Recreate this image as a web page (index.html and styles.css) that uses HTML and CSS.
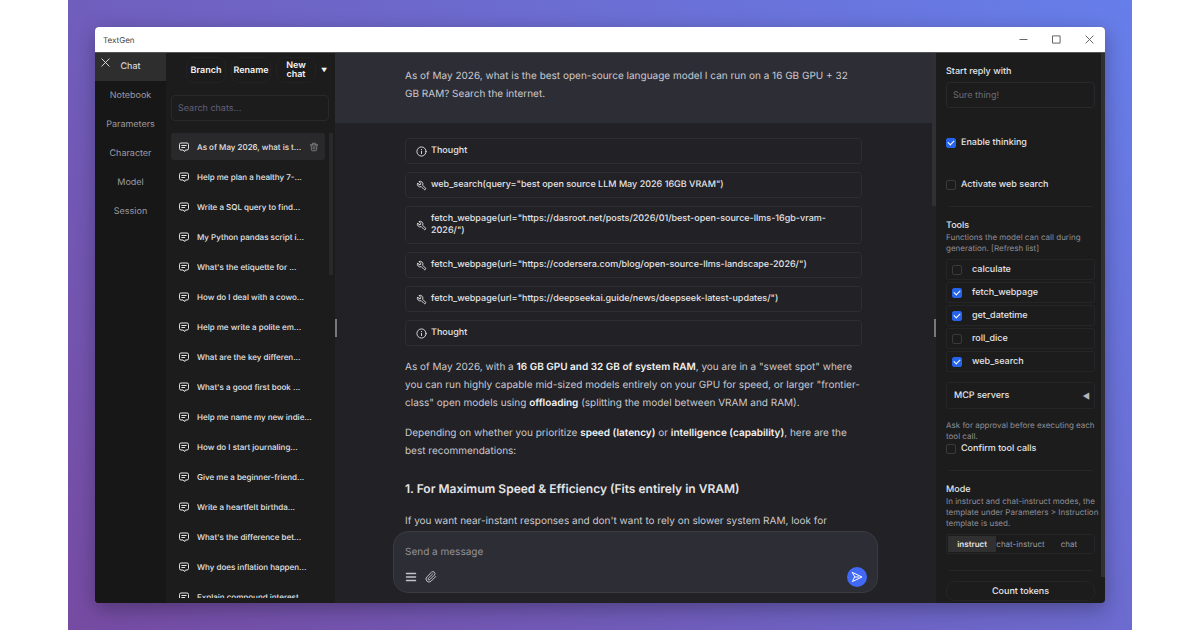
FILE: index.html
```html
<!DOCTYPE html>
<html lang="en">
<head>
  <meta charset="UTF-8" />
  <meta name="viewport" content="width=device-width, initial-scale=1.0" />
  <title>TextGen</title>
  <link rel="stylesheet" href="styles.css">
</head>
<body>
  <svg class="sprite" aria-hidden="true">
    <symbol id="i-chat" viewBox="0 0 24 24"><path d="M7.5 9h9M7.5 13h6M13 20.5L10 18H6a3 3 0 0 1-3-3V7a3 3 0 0 1 3-3h12a3 3 0 0 1 3 3v8a3 3 0 0 1-3 3h-2.5z"/></symbol>
    <symbol id="i-info" viewBox="0 0 24 24"><circle cx="12" cy="12" r="10"/><path d="M12 16.500v-5M12 7.500v.5"/></symbol>
    <symbol id="i-tool" viewBox="0 0 24 24"><path d="M7 10h3V7L6.500 3.500a6 6 0 0 1 8 8l6 6a2 2 0 0 1-3 3l-6-6a6 6 0 0 1-8-8L7 10z"/></symbol>
    <symbol id="i-trash" viewBox="0 0 24 24"><path d="M3 7h18M10 11v6M14 11v6M5 7l1 12a2 2 0 0 0 2 2h8a2 2 0 0 0 2-2l1-12M8 7V3h8v4"/></symbol>
    <symbol id="i-close" viewBox="0 0 24 24"><path d="M4 4l16 16M20 4L4 20"/></symbol>
  </svg>

  <div class="stage">
    <div class="window">
      <header class="titlebar">
        <span>TextGen</span>
        <div class="window-buttons">
          <button aria-label="Minimize"><svg viewBox="0 0 10 10"><path d="M1 5h8"/></svg></button>
          <button aria-label="Maximize"><svg viewBox="0 0 10 10"><rect x="1" y="1" width="8" height="8"/></svg></button>
          <button aria-label="Close"><svg viewBox="0 0 10 10"><path d="M1 1l8 8M9 1L1 9"/></svg></button>
        </div>
      </header>

      <div class="app">
        <nav class="tabs">
          <button class="close-nav" aria-label="Close menu"><svg class="icon"><use href="#i-close"/></svg></button>
          <a href="#" class="active">Chat</a>
          <a href="#">Notebook</a>
          <a href="#">Parameters</a>
          <a href="#">Character</a>
          <a href="#">Model</a>
          <a href="#">Session</a>
        </nav>

        <aside class="history">
          <div class="history-actions">
            <button>Branch</button>
            <button>Rename</button>
            <button>New chat</button>
            <button class="more" aria-label="More">▼</button>
          </div>
          <input class="field search" type="text" placeholder="Search chats..." aria-label="Search chats">
          <div class="chat-list">
            <button class="active"><svg class="icon"><use href="#i-chat"/></svg><span>As of May 2026, what is t...</span><svg class="icon trash"><use href="#i-trash"/></svg></button>
            <button><svg class="icon"><use href="#i-chat"/></svg><span>Help me plan a healthy 7-...</span></button>
            <button><svg class="icon"><use href="#i-chat"/></svg><span>Write a SQL query to find...</span></button>
            <button><svg class="icon"><use href="#i-chat"/></svg><span>My Python pandas script i...</span></button>
            <button><svg class="icon"><use href="#i-chat"/></svg><span>What's the etiquette for ...</span></button>
            <button><svg class="icon"><use href="#i-chat"/></svg><span>How do I deal with a cowo...</span></button>
            <button><svg class="icon"><use href="#i-chat"/></svg><span>Help me write a polite em...</span></button>
            <button><svg class="icon"><use href="#i-chat"/></svg><span>What are the key differen...</span></button>
            <button><svg class="icon"><use href="#i-chat"/></svg><span>What's a good first book ...</span></button>
            <button><svg class="icon"><use href="#i-chat"/></svg><span>Help me name my new indie...</span></button>
            <button><svg class="icon"><use href="#i-chat"/></svg><span>How do I start journaling...</span></button>
            <button><svg class="icon"><use href="#i-chat"/></svg><span>Give me a beginner-friend...</span></button>
            <button><svg class="icon"><use href="#i-chat"/></svg><span>Write a heartfelt birthda...</span></button>
            <button><svg class="icon"><use href="#i-chat"/></svg><span>What's the difference bet...</span></button>
            <button><svg class="icon"><use href="#i-chat"/></svg><span>Why does inflation happen...</span></button>
            <button><svg class="icon"><use href="#i-chat"/></svg><span>Explain compound interest</span></button>
            <div class="scrollbar"></div>
          </div>
        </aside>

        <main class="chat">
          <div class="handle handle-left"></div>
          <div class="handle handle-right"></div>
          <div class="scrollbar"></div>
          <div class="messages">
            <div class="user-message">
              <p>As of May 2026, what is the best open-source language model I can run on a 16 GB GPU + 32 GB RAM? Search the internet.</p>
            </div>
            <div class="reply">
              <div class="steps">
                <button><svg class="icon"><use href="#i-info"/></svg><span>Thought</span></button>
                <button><svg class="icon"><use href="#i-tool"/></svg><span>web_search(query="best open source LLM May 2026 16GB VRAM")</span></button>
                <button><svg class="icon"><use href="#i-tool"/></svg><span>fetch_webpage(url="https://dasroot.net/posts/2026/01/best-open-source-llms-16gb-vram-2026/")</span></button>
                <button><svg class="icon"><use href="#i-tool"/></svg><span>fetch_webpage(url="https://codersera.com/blog/open-source-llms-landscape-2026/")</span></button>
                <button><svg class="icon"><use href="#i-tool"/></svg><span>fetch_webpage(url="https://deepseekai.guide/news/deepseek-latest-updates/")</span></button>
                <button><svg class="icon"><use href="#i-info"/></svg><span>Thought</span></button>
              </div>
              <p>As of May 2026, with a <strong>16 GB GPU and 32 GB of system RAM</strong>, you are in a "sweet spot" where you can run highly capable mid-sized models entirely on your GPU for speed, or larger "frontier-class" open models using <strong>offloading</strong> (splitting the model between VRAM and RAM).</p>
              <p>Depending on whether you prioritize <strong>speed (latency)</strong> or <strong>intelligence (capability)</strong>, here are the best recommendations:</p>
              <h3>1. For Maximum Speed &amp; Efficiency (Fits entirely in VRAM)</h3>
              <p>If you want near-instant responses and don't want to rely on slower system RAM, look for</p>
            </div>
          </div>

          <form class="composer">
            <textarea rows="1" placeholder="Send a message" aria-label="Message"></textarea>
            <div class="composer-actions">
              <button type="button" aria-label="Menu"><svg class="menu" viewBox="0 0 24 24"><path d="M3 5h18M3 12h18M3 19h18"/></svg></button>
              <button type="button" aria-label="Attach file"><svg viewBox="0 0 24 24"><path d="M21.500 11l-9.200 9.200a6 6 0 0 1-8.500-8.500l9.200-9.200a4 4 0 0 1 5.700 5.700l-9.200 9.200a2 2 0 0 1-2.900-2.900l8.500-8.400"/></svg></button>
              <button type="button" class="send" aria-label="Send"><svg viewBox="0 0 24 24"><path d="M3 3l19 9-19 9 4-9zM7 12h9"/></svg></button>
            </div>
          </form>
        </main>

        <aside class="settings">
          <div class="scrollbar"></div>
          <section class="reply-start">
            <label class="title" for="start-reply">Start reply with</label>
            <input class="field" id="start-reply" type="text" placeholder="Sure thing!">
          </section>
          <label class="check"><input type="checkbox" checked>Enable thinking</label>
          <label class="check"><input type="checkbox">Activate web search</label>
          <hr>
          <section>
            <h4 class="title">Tools</h4>
            <p class="hint">Functions the model can call during generation. [Refresh list]</p>
            <div class="tool-list">
              <label><input type="checkbox">calculate</label>
              <label><input type="checkbox" checked>fetch_webpage</label>
              <label><input type="checkbox" checked>get_datetime</label>
              <label><input type="checkbox">roll_dice</label>
              <label><input type="checkbox" checked>web_search</label>
            </div>
          </section>
          <button class="accordion"><span>MCP servers</span><span class="arrow">◀</span></button>
          <section class="confirm">
            <p class="hint">Ask for approval before executing each tool call.</p>
            <label class="check"><input type="checkbox">Confirm tool calls</label>
          </section>
          <hr>
          <section>
            <h4 class="title">Mode</h4>
            <p class="hint">In instruct and chat-instruct modes, the template under Parameters &gt; Instruction template is used.</p>
            <div class="modes">
              <label><input type="radio" name="mode" checked><span>instruct</span></label>
              <label><input type="radio" name="mode"><span>chat-instruct</span></label>
              <label><input type="radio" name="mode"><span>chat</span></label>
            </div>
          </section>
          <hr class="last">
          <button class="count">Count tokens</button>
        </aside>
      </div>
    </div>
  </div>
</body>
</html>
```
FILE: styles.css
```css
:root {
  --nav-bg: #171717;
  --panel-bg: #1c1c1d;
  --chat-bg: #222125;
  --raised: #2d2d35;
  --active: #2e2e2f;
  --line: #29292c;
  --text: #e4e4e6;
  --muted: #9b9ba2;
  --blue: #2563eb;
}

* {
  box-sizing: border-box;
}

body {
  margin: 0;
  background: #fff;
  color: var(--text);
  font-family: Inter, "Liberation Sans", sans-serif;
  font-size: 9px;
  text-rendering: geometricPrecision;
}

button, input, textarea {
  font: inherit;
  color: inherit;
  text-rendering: inherit;
}

button {
  padding: 0;
  border: none;
  background: none;
  cursor: pointer;
}

a {
  color: inherit;
  text-decoration: none;
}

h3, h4, p {
  margin: 0;
}

svg {
  fill: none;
  stroke: currentColor;
  stroke-width: 2;
  stroke-linecap: round;
  stroke-linejoin: round;
}

.sprite {
  display: none;
}

.icon {
  flex: none;
  width: 12px;
  height: 12px;
}

.stage {
  height: 100vh;
  margin: 0 68px;
  padding: 27px;
  background: linear-gradient(225deg, #667eea, #764ba2);
}

.window {
  display: flex;
  flex-direction: column;
  height: 100%;
  overflow: hidden;
  border-radius: 4px;
  background: var(--panel-bg);
  box-shadow: 0 6px 20px rgba(0, 0, 0, 0.3);
}

.titlebar {
  display: flex;
  flex: none;
  justify-content: space-between;
  align-items: center;
  height: 26px;
  padding: 0 11px 0 8px;
  border-bottom: 1px solid #55555a;
  background: #fff;
  color: #444;
  font-size: 8px;
}

.window-buttons {
  display: flex;
  gap: 24px;
}

.window-buttons button {
  display: flex;
  color: #555;
}

.window-buttons svg {
  width: 9px;
  height: 9px;
  stroke-width: 1;
}

.app {
  display: flex;
  flex: 1;
  min-height: 0;
}

.scrollbar {
  position: absolute;
  top: 0;
  right: 0;
  width: 4px;
  background: #303034;
}

/* Left tabs */
.tabs {
  position: relative;
  display: flex;
  flex: none;
  flex-direction: column;
  gap: 1px;
  width: 71px;
  background: var(--nav-bg);
  color: var(--muted);
  text-align: center;
}

.tabs a {
  line-height: 28px;
}

.tabs a.active {
  background: var(--active);
  color: var(--text);
}

.close-nav {
  position: absolute;
  top: 4px;
  left: 5px;
  display: flex;
  color: var(--text);
}

.close-nav .icon {
  width: 11px;
  height: 11px;
}

/* Past chats */
.history {
  display: flex;
  flex: none;
  flex-direction: column;
  width: 169px;
  padding: 4px 2px 5px 5px;
}

.history-actions {
  display: flex;
  align-items: center;
  gap: 5px;
  padding-left: 15px;
}

.history-actions button {
  display: flex;
  flex: none;
  justify-content: center;
  align-items: center;
  width: 40px;
  height: 26px;
  padding: 0 8px;
  border: 1px solid #222225;
  border-radius: 8px;
  color: #f2f2f4;
  font-weight: 600;
  line-height: 9px;
}

.history-actions .more {
  width: 6px;
  padding: 0;
  border: none;
  font-size: 6px;
}

.field {
  width: 100%;
  height: 26px;
  padding: 0 6px;
  border: 1px solid var(--line);
  border-radius: 4px;
  background: transparent;
}

.field::placeholder {
  color: #6c6c74;
}

.search {
  width: auto;
  margin: 12px 4px 12px 0;
}

.search::placeholder {
  color: #62607a;
}

.chat-list {
  position: relative;
  display: flex;
  flex: 1;
  flex-direction: column;
  gap: 3px;
  min-height: 0;
  padding-right: 8px;
  overflow: hidden;
}

.chat-list button {
  display: flex;
  flex: none;
  align-items: center;
  gap: 7px;
  height: 27px;
  padding: 0 6px 0 7px;
  border-radius: 3px;
  font-size: 8px;
  font-weight: 500;
  text-align: left;
  white-space: nowrap;
}

.chat-list button.active {
  background: #29292b;
}

.chat-list .trash {
  width: 10px;
  height: 10px;
  margin-left: auto;
  color: #88888c;
}

.chat-list .scrollbar {
  height: 142px;
  background: #29292b;
}

/* Conversation */
.chat {
  position: relative;
  display: flex;
  flex: 1;
  flex-direction: column;
  min-width: 0;
  padding-bottom: 10px;
  background: var(--chat-bg);
}

.chat > .scrollbar {
  height: 153px;
}

.handle {
  position: absolute;
  top: 266px;
  width: 2px;
  height: 18px;
  background: #77777c;
}

.handle-left {
  left: 0;
}

.handle-right {
  right: 0;
}

.messages {
  flex: 1;
  min-height: 0;
  overflow: hidden;
  font-size: 10px;
  line-height: 18px;
  color: #c9c9ce;
}

.user-message {
  padding: 14px 74px 20px 70px;
  background: var(--raised);
}

.reply {
  display: flex;
  flex-direction: column;
  gap: 12px;
  padding: 15px 74px 0 70px;
}

.steps {
  display: flex;
  flex-direction: column;
  gap: 8px;
}

.steps button {
  display: flex;
  align-items: center;
  gap: 4px;
  padding: 6px 10px;
  border: 1px solid #2d2d32;
  border-radius: 4px;
  color: var(--text);
  font-size: 9px;
  font-weight: 500;
  line-height: 12px;
  text-align: left;
}

.steps .icon {
  width: 11px;
  height: 11px;
}

.reply strong {
  color: #f2f2f4;
  font-weight: 600;
}

.reply h3 {
  margin: 8px 0 2px;
  color: var(--text);
  font-size: 12px;
  font-weight: 600;
  line-height: 18px;
}

.composer {
  flex: none;
  margin: 0 58px;
  padding: 11px 10px 5px 11px;
  border: 1px solid #3a3a41;
  border-radius: 15px;
  background: var(--raised);
}

.composer textarea {
  display: block;
  width: 100%;
  height: 18px;
  padding: 0;
  border: none;
  outline: none;
  background: transparent;
  resize: none;
  font-size: 10px;
  line-height: 18px;
}

.composer textarea::placeholder {
  color: #93939b;
}

.composer-actions {
  display: flex;
  align-items: center;
  gap: 8px;
  margin-top: 6px;
}

.composer-actions button {
  display: flex;
  color: #c3c3c9;
}

.composer-actions svg {
  width: 12px;
  height: 12px;
}

.composer-actions .menu {
  stroke-width: 3;
}

.composer-actions .send {
  justify-content: center;
  align-items: center;
  width: 20px;
  height: 20px;
  margin-left: auto;
  border-radius: 50%;
  background: #4169f5;
  color: #fff;
}

/* Right settings */
.settings {
  position: relative;
  flex: none;
  width: 169px;
  padding: 12px 10px 0;
  overflow: hidden;
}

.settings > .scrollbar {
  height: 524px;
}

.title {
  display: block;
  font-size: 9px;
  font-weight: 500;
  line-height: 13px;
}

.reply-start .field {
  margin-top: 4px;
}

.settings hr {
  margin: 14px 3px 12px;
  border: none;
  border-top: 1px solid #272729;
}

.check {
  display: flex;
  align-items: center;
  gap: 5px;
  margin-top: 28px;
  font-weight: 500;
  line-height: 14px;
}

.settings input[type="checkbox"] {
  display: grid;
  place-content: center;
  width: 10px;
  height: 10px;
  margin: 0;
  border: 1px solid #3a3a3d;
  border-radius: 2px;
  appearance: none;
}

.settings input[type="checkbox"]:checked {
  border-color: var(--blue);
  background: var(--blue);
}

.settings input[type="checkbox"]:checked::before {
  content: "";
  width: 5px;
  height: 3px;
  border: solid #fff;
  border-width: 0 0 1px 1px;
  transform: translateY(-1px) rotate(-45deg);
}

.hint {
  margin-right: -6px;
  color: #8f8f96;
  font-size: 8px;
  line-height: 11px;
}

.tool-list {
  display: flex;
  flex-direction: column;
  gap: 2px;
  margin-top: 5px;
}

.tool-list label {
  display: flex;
  align-items: center;
  gap: 10px;
  height: 21px;
  padding: 0 5px;
  border: 1px solid #252527;
  border-radius: 2px;
  font-weight: 500;
}

.accordion {
  display: flex;
  justify-content: space-between;
  align-items: center;
  width: 100%;
  height: 27px;
  margin-top: 10px;
  padding: 0 4px 0 7px;
  border: 1px solid #252527;
  border-radius: 3px;
  font-weight: 500;
}

.arrow {
  color: #b5b5b9;
  font-size: 8px;
}

.confirm {
  margin-top: 11px;
}

.confirm .check {
  margin-top: 0;
}

.modes {
  display: grid;
  grid-template-columns: 1fr 1fr 1fr;
  margin-top: 5px;
  padding: 1px;
  border: 1px solid #252527;
  border-radius: 2px;
  color: var(--muted);
  font-size: 8px;
  line-height: 16px;
  text-align: center;
  white-space: nowrap;
}

.modes input {
  position: absolute;
  opacity: 0;
}

.modes span {
  display: block;
}

.modes input:checked + span {
  background: #303031;
  color: var(--text);
  font-weight: 600;
}

.settings hr.last {
  margin: 16px 3px 10px;
}

.count {
  display: block;
  width: 100%;
  height: 20px;
  border: 1px solid #252527;
  border-radius: 8px;
  font-weight: 500;
}
```
